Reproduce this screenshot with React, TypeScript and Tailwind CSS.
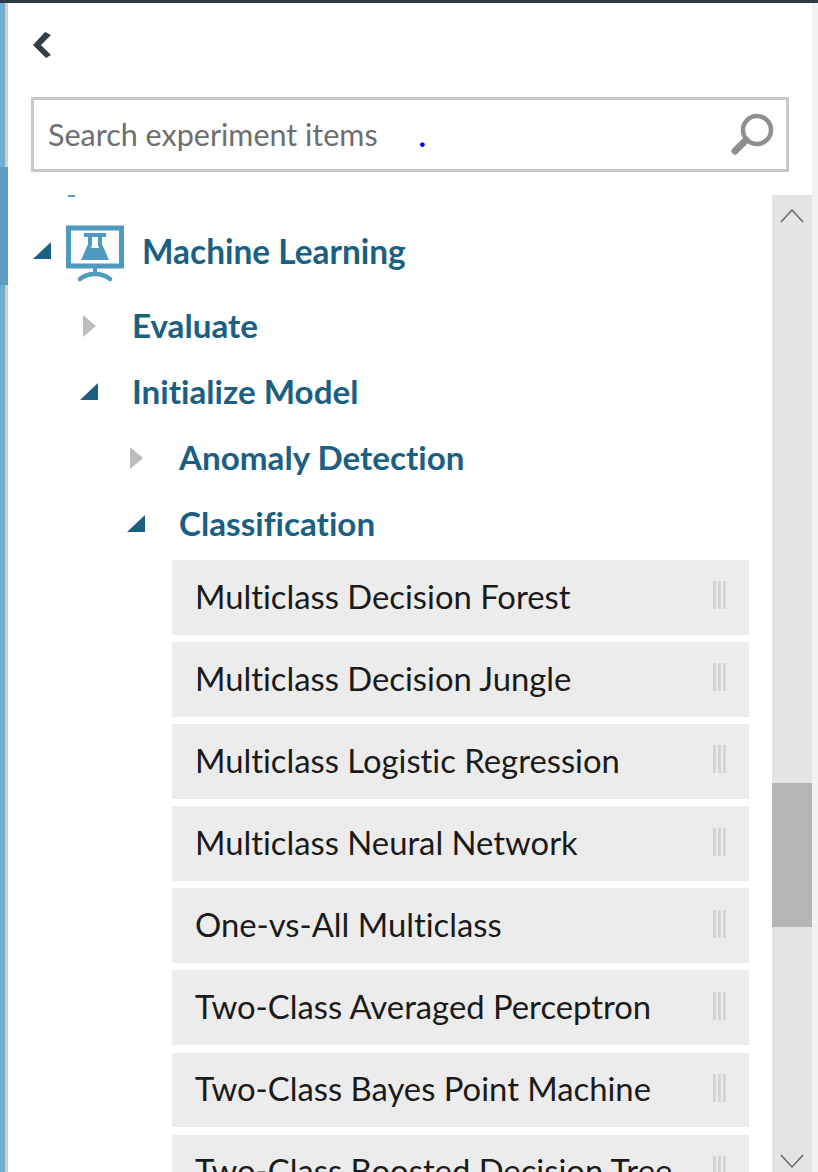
// Experiment item palette: search box, module tree and a fake scrollbar
import React from 'react';

const FONT = "font-['Lato',sans-serif] [font-variant-ligatures:none]";

const modules = [
  'Multiclass Decision Forest',
  'Multiclass Decision Jungle',
  'Multiclass Logistic Regression',
  'Multiclass Neural Network',
  'One-vs-All Multiclass',
  'Two-Class Averaged Perceptron',
  'Two-Class Bayes Point Machine',
  'Two-Class Boosted Decision Tree',
];

const Open: React.FC = () => (
  <svg width="19" height="18" viewBox="0 0 19 18" className="shrink-0">
    <path d="M18 0V17H0Z" fill="#1b5f82" />
  </svg>
);

const Closed: React.FC = () => (
  <svg width="14" height="24" viewBox="0 0 14 24" className="ml-[3px] shrink-0">
    <path d="M0 1L13 12L0 23Z" fill="#bdbdbd" />
  </svg>
);

const Row: React.FC<{ open?: boolean; indent: string; label: string }> = ({ open, indent, label }) => (
  <div className={`flex h-[66px] items-center ${indent}`}>
    <div className="flex w-[52px] items-center">{open ? <Open /> : <Closed />}</div>
    <span className="text-[33.2px] font-bold text-[#1b5f82]">{label}</span>
  </div>
);

const App: React.FC = () => (
  <div className={`flex h-[1172px] w-[818px] flex-col overflow-hidden bg-white ${FONT}`}>
    <div className="h-[3px] shrink-0 bg-[#2f3a44]" />
    <div className="flex min-h-0 flex-1">
      <div className="flex w-[8px] shrink-0 flex-col bg-[linear-gradient(to_right,#6fadd1_5px,#cfcfcf_5px)]">
        <div className="mt-[164px] h-[118px] bg-[#5a9fc0]" />
      </div>
      <div className="flex min-w-0 flex-1 flex-col pl-[23px]">
        <div className="h-[94px] pl-[2px] pt-[29px]">
          <svg width="18" height="26" viewBox="0 0 18 26">
            <path d="M12 0L18 3L8 13L18 23L13 26L0 13Z" fill="#333d47" />
          </svg>
        </div>
        <div className="flex h-[75px] w-[758px] shrink-0 items-center justify-between border-[3px] border-[#c8c8c8] pl-[14px] pr-[12px]">
          <div className="flex items-center">
            <span className="text-[30.5px] text-[#6e6e6e]">Search experiment items</span>
            <span className="ml-[41px] mt-[2px] text-[30px] font-bold text-[#0000f0]">.</span>
          </div>
          <svg width="44" height="44" viewBox="0 0 44 44">
            <circle cx="27" cy="17" r="14" fill="none" stroke="#8f8f8f" strokeWidth="4.5" />
            <path d="M16 27L5 38" stroke="#8f8f8f" strokeWidth="7" strokeLinecap="round" />
          </svg>
        </div>
        <div className="flex min-h-0 flex-1 pt-[23px]">
          <div className="min-w-0 flex-1">
            <div className="ml-[37px] h-[2px] w-[7px] bg-[#5a9fc0]" />
            <div className="mt-[21px] flex h-[66px] items-center pl-[2px]">
              <div className="w-[33px]"><Open /></div>
              <svg width="58" height="58" viewBox="0 0 58 58" className="mt-[6px] shrink-0">
                <rect x="2.5" y="3" width="53" height="38" fill="none" stroke="#4f9bbf" strokeWidth="5" />
                <path d="M18 8H40V12H36V19L43 35H15L22 19V12H18Z" fill="#4f9bbf" />
                <path d="M26 12H32V20L33 23H25L26 20Z" fill="#ffffff" />
                <path d="M27 42H31V49H27Z" fill="#4f9bbf" />
                <path d="M14 54C19 50 24 49 29 49C34 49 39 50 44 54" fill="none" stroke="#4f9bbf" strokeWidth="4.5" strokeLinecap="round" />
              </svg>
              <span className="ml-[18px] text-[33.4px] font-bold text-[#1b5f82]">Machine Learning</span>
            </div>
            <div className="mt-[9px]">
              <Row indent="pl-[49px]" label="Evaluate" />
              <Row open indent="pl-[49px]" label="Initialize Model" />
              <Row indent="pl-[96px]" label="Anomaly Detection" />
              <Row open indent="pl-[96px]" label="Classification" />
            </div>
            <div className="ml-[141px] mt-[3px] flex w-[577px] flex-col gap-[7.5px]">
              {modules.map((m) => (
                <div key={m} className="flex h-[74.6px] shrink-0 items-center justify-between bg-[#ececec] pl-[23px] pr-[23px] pb-[2px] text-[32.8px] text-[#1a1a1a]">
                  <span>{m}</span>
                  <div className="mb-[2px] flex h-[28px] gap-[2px]">
                    <div className="w-[3px] bg-[#d4d4d4]" />
                    <div className="w-[3px] bg-[#d4d4d4]" />
                    <div className="w-[3px] bg-[#d4d4d4]" />
                  </div>
                </div>
              ))}
            </div>
          </div>
          <div className="flex w-[40px] shrink-0 flex-col bg-[#e4e4e4]">
            <div className="flex h-[40px] items-center justify-center">
              <svg width="24" height="15" viewBox="0 0 24 15">
                <path d="M1 14L12 2L23 14" fill="none" stroke="#666666" strokeWidth="1.5" />
              </svg>
            </div>
            <div className="mt-[548px] h-[144px] bg-[#b6b6b6]" />
            <div className="mt-auto flex h-[40px] items-end justify-center pb-[3px]">
              <svg width="24" height="15" viewBox="0 0 24 15">
                <path d="M1 1L12 13L23 1" fill="none" stroke="#666666" strokeWidth="1.5" />
              </svg>
            </div>
          </div>
        </div>
      </div>
      <div className="w-[6px] shrink-0 bg-[#f2f2f2]" />
    </div>
  </div>
);

export default App;
